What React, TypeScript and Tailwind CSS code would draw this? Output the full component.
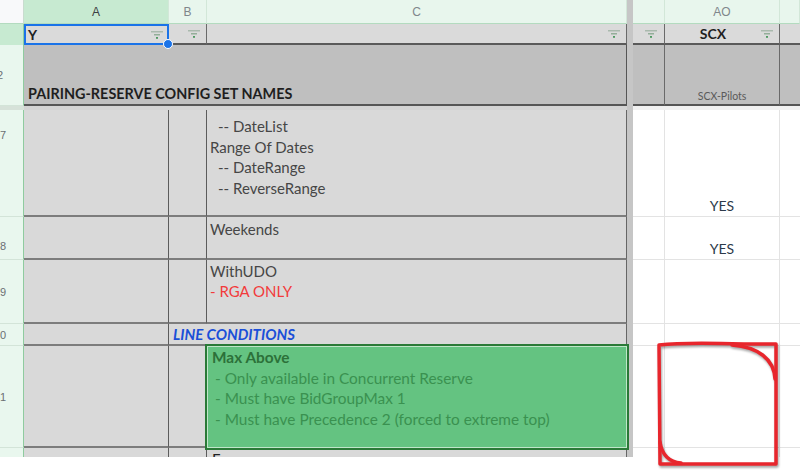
import React from "react";

function FilterIcon() {
  return (
    <svg width="12" height="8" viewBox="0 0 12 8" className="shrink-0">
      <rect x="0" y="0" width="12" height="1.5" fill="#a9b9ad" />
      <rect x="3" y="3" width="6" height="1.5" fill="#93ae99" />
      <rect x="5" y="6" width="2" height="1.8" fill="#4e9a62" />
    </svg>
  );
}

function Hdr({ w, label, sel }: { w: string; label: string; sel?: boolean }) {
  return (
    <div
      className={`${w} flex items-center justify-center border-r border-b border-r-[#d2e7d8] border-b-[#b3dbbf] font-['Liberation_Sans',sans-serif] text-[12px] ${
        sel ? "bg-[#c7ead1] text-[#3c4043]" : "bg-[#e8f6ed] text-[#80868b]"
      }`}
    >
      {label}
    </div>
  );
}

function RowNum({ n, cls }: { n: string; cls: string }) {
  return (
    <div
      className={`w-[24px] shrink-0 overflow-hidden flex bg-[#e9f7ee] border-r border-b border-r-[#8fcb9f] border-b-[#d3e4d8] ${cls}`}
    >
      <span className="w-[40px] -ml-[20px] shrink-0 text-center font-['Liberation_Sans',sans-serif] text-[11px] leading-[14px] text-[#6b6f73]">
        {n}
      </span>
    </div>
  );
}

function Divider() {
  return <div className="w-[6px] shrink-0 bg-[#c6c6c6]" />;
}

function GrayA() {
  return <div className="w-[145px] shrink-0 bg-[#d9d9d9] border-r border-b-2 border-r-[#5c5c5c] border-b-[#7d7d7d]" />;
}
function GrayB() {
  return <div className="w-[38px] shrink-0 bg-[#d9d9d9] border-r border-b-2 border-r-[#5c5c5c] border-b-[#7d7d7d]" />;
}

function RightCells({ yes }: { yes?: boolean }) {
  return (
    <>
      <div className="w-[32px] shrink-0 bg-white border-r border-b border-[#e3e3e3]" />
      <div className="w-[115px] shrink-0 bg-white border-r border-b border-[#e3e3e3] flex items-end justify-center pb-[1px]">
        {yes && <span className="text-[14px] leading-[18px] text-[#2d3a4a]">YES</span>}
      </div>
      <div className="w-[20px] shrink-0 bg-white border-b border-[#e3e3e3]" />
    </>
  );
}

const cCls =
  "w-[420px] shrink-0 bg-[#d9d9d9] border-r border-b-2 border-r-[#666] border-b-[#7d7d7d] pl-[3px] text-[15px] text-[#464646]";

export default function App() {
  return (
    <div className="relative w-[800px] h-[470px] overflow-hidden bg-white font-['Lato','Liberation_Sans',sans-serif]">
      {/* column headers */}
      <div className="flex h-[24px]">
        <div className="w-[24px] shrink-0 bg-[#f8f9fa] border-r border-b border-r-[#c9dccf] border-b-[#b3dbbf]" />
        <Hdr w="w-[145px] shrink-0" label="A" sel />
        <Hdr w="w-[38px] shrink-0" label="B" />
        <Hdr w="w-[420px] shrink-0" label="C" />
        <Divider />
        <Hdr w="w-[32px] shrink-0" label="" />
        <Hdr w="w-[115px] shrink-0" label="AO" />
        <Hdr w="w-[20px] shrink-0" label="" />
      </div>

      {/* row 1 */}
      <div className="flex h-[21px]">
        <div className="w-[24px] shrink-0 bg-[#c7ead1] border-r border-r-[#8fcb9f]" />
        <div className="relative z-20 w-[145px] shrink-0 bg-[#dadada] border-2 border-[#1a73e8] flex items-center justify-between pl-[2px] pr-[4px]">
          <span className="font-bold text-[14px] text-[#202124]">Y</span>
          <FilterIcon />
          <div className="absolute -right-[6px] -bottom-[6px] w-[10px] h-[10px] rounded-full bg-[#1a73e8] border border-white" />
        </div>
        <div className="w-[38px] shrink-0 bg-[#dadada] border-r border-b-2 border-r-[#6a6a6a] border-b-[#5a5a5a] flex items-center justify-end pr-[6px]">
          <FilterIcon />
        </div>
        <div className="w-[420px] shrink-0 bg-[#dadada] border-r border-b-2 border-r-[#6a6a6a] border-b-[#5a5a5a] flex items-center justify-end pr-[6px]">
          <FilterIcon />
        </div>
        <Divider />
        <div className="w-[32px] shrink-0 bg-[#dadada] border-r border-b-2 border-r-[#6a6a6a] border-b-[#5a5a5a] flex items-center justify-end pr-[7px]">
          <FilterIcon />
        </div>
        <div className="w-[115px] shrink-0 bg-[#dadada] border-r border-b-2 border-r-[#6a6a6a] border-b-[#5a5a5a] flex items-center pr-[6px]">
          <span className="flex-1 text-center font-bold text-[14px] text-[#1f1f1f]">SCX</span>
          <FilterIcon />
        </div>
        <div className="w-[20px] shrink-0 bg-[#dadada] border-b-2 border-b-[#5a5a5a]" />
      </div>

      {/* row 2 */}
      <div className="flex h-[61px]">
        <RowNum n="2" cls="items-center" />
        <div className="w-[603px] shrink-0 bg-[#bfbfbf] border-r border-b-2 border-r-[#555] border-b-[#555] flex items-end pl-[4px] pb-[2px]">
          <span className="font-bold text-[14.4px] leading-[17px] text-[#1e1e1e]">PAIRING-RESERVE CONFIG SET NAMES</span>
        </div>
        <Divider />
        <div className="w-[32px] shrink-0 bg-[#bfbfbf] border-r border-b-2 border-r-[#6a6a6a] border-b-[#555]" />
        <div className="w-[115px] shrink-0 bg-[#bfbfbf] border-r border-b-2 border-r-[#6a6a6a] border-b-[#555] flex items-end justify-center pb-[1px]">
          <span className="text-[10.5px] leading-[13px] text-[#5a5a5a]">SCX-Pilots</span>
        </div>
        <div className="w-[20px] shrink-0 bg-[#bfbfbf] border-b-2 border-b-[#555]" />
      </div>

      {/* frozen rows separator */}
      <div className="flex h-[4px]">
        <div className="w-[24px] shrink-0 bg-[#d6e2d9]" />
        <div className="w-[603px] shrink-0 bg-[#d3d3d3]" />
        <Divider />
        <div className="flex-1 bg-[#f1f1f1]" />
      </div>

      {/* row 77 */}
      <div className="flex h-[107px]">
        <RowNum n="77" cls="items-start pt-[18px]" />
        <GrayA />
        <GrayB />
        <div className={`${cCls} pt-[6px] leading-[20.5px]`}>
          <div className="pl-[8px]">-- DateList</div>
          <div>Range Of Dates</div>
          <div className="pl-[8px]">-- DateRange</div>
          <div className="pl-[8px]">-- ReverseRange</div>
        </div>
        <Divider />
        <RightCells yes />
      </div>

      {/* row 78 */}
      <div className="flex h-[43px]">
        <RowNum n="78" cls="items-start pt-[22px]" />
        <GrayA />
        <GrayB />
        <div className={`${cCls} pt-[2px] leading-[20px]`}>Weekends</div>
        <Divider />
        <RightCells yes />
      </div>

      {/* row 79 */}
      <div className="flex h-[64px]">
        <RowNum n="79" cls="items-center" />
        <GrayA />
        <GrayB />
        <div className={`${cCls} pt-[1px] leading-[20px]`}>
          <div>WithUDO</div>
          <div className="text-[#f23b3b]">- RGA ONLY</div>
        </div>
        <Divider />
        <RightCells />
      </div>

      {/* row 80 */}
      <div className="flex h-[22px]">
        <RowNum n="80" cls="items-center" />
        <GrayA />
        <div className="w-[458px] shrink-0 bg-[#d9d9d9] border-r border-b-2 border-r-[#666] border-b-[#7d7d7d] pl-[4px] flex items-center">
          <span className="font-bold italic text-[15px] leading-[18px] text-[#1b4fd8]">LINE CONDITIONS</span>
        </div>
        <Divider />
        <RightCells />
      </div>

      {/* row 81 */}
      <div className="flex h-[102px]">
        <RowNum n="81" cls="items-center" />
        <GrayA />
        <GrayB />
        <div className="relative z-10 w-[420px] shrink-0 bg-[#64c381] outline-2 outline-[#2a7a37] border border-[#bfe6c9] pl-[4px] text-[15.4px] leading-[20.7px] text-[#3a9150]">
          <div className="font-bold text-[#2c7139]">Max Above</div>
          <div className="pl-[3px]">- Only available in Concurrent Reserve</div>
          <div className="pl-[3px]">- Must have BidGroupMax 1</div>
          <div className="pl-[3px]">- Must have Precedence 2 (forced to extreme top)</div>
        </div>
        <Divider />
        <RightCells />
      </div>

      {/* row 82 (partial) */}
      <div className="flex h-[9px]">
        <div className="w-[24px] shrink-0 bg-[#e9f7ee] border-r border-r-[#8fcb9f]" />
        <div className="w-[145px] shrink-0 bg-[#d9d9d9] border-r border-r-[#5c5c5c]" />
        <div className="w-[38px] shrink-0 bg-[#d9d9d9] border-r border-r-[#5c5c5c]" />
        <div className="w-[420px] shrink-0 overflow-hidden bg-[#d9d9d9] border-r border-r-[#666] pl-[5px] pt-[4px] text-[15px] leading-[15px] text-[#222]">
          F
        </div>
        <Divider />
        <div className="w-[32px] shrink-0 bg-white border-r border-[#e3e3e3]" />
        <div className="w-[115px] shrink-0 bg-white border-r border-[#e3e3e3]" />
        <div className="w-[20px] shrink-0 bg-white" />
      </div>

      {/* hand-drawn red annotation */}
      <svg
        className="absolute left-[654px] top-[339px] z-30 drop-shadow-[1px_2px_1px_rgba(0,0,0,0.35)]"
        width="128"
        height="130"
        viewBox="0 0 128 130"
      >
        <g fill="none" stroke="#e8262d" strokeWidth="3.5" strokeLinecap="round" strokeLinejoin="round">
          <path d="M5 6 C30 3 60 4 90 5 L122 5 L122 125 L6 125 Z" />
          <path d="M78 6 C104 8 120 20 121 40" />
          <path d="M6 103 C8 116 15 123 27 124" />
        </g>
      </svg>
    </div>
  );
}
